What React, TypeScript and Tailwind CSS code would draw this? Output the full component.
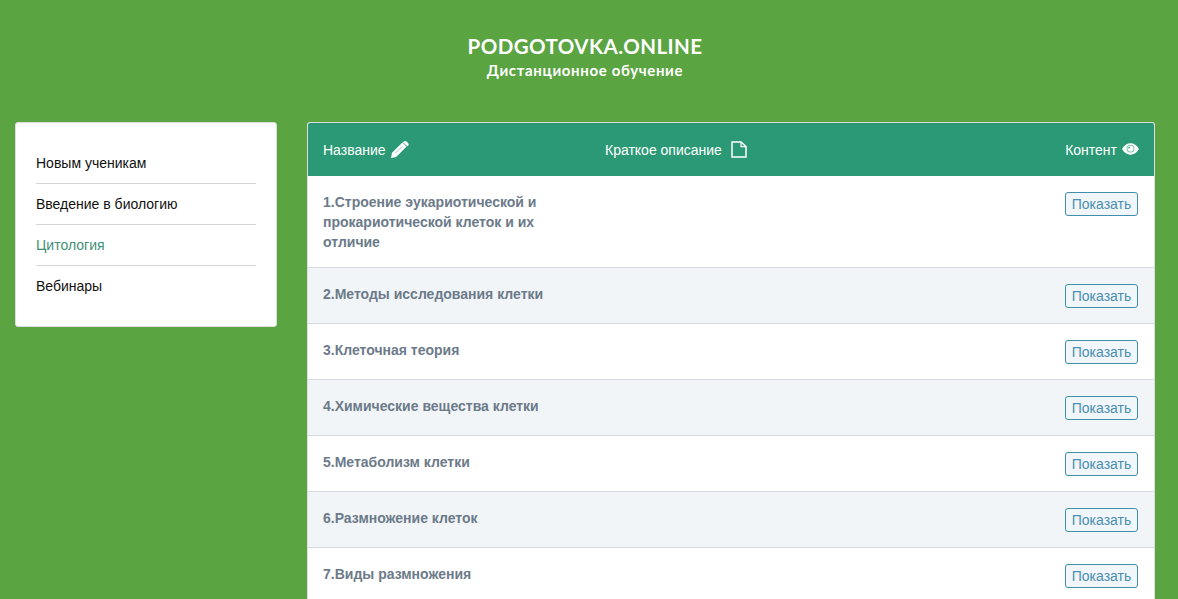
const menu = [
  { title: 'Новым ученикам', active: false },
  { title: 'Введение в биологию', active: false },
  { title: 'Цитология', active: true },
  { title: 'Вебинары', active: false },
];

const lessons = [
  '1.Строение эукариотической и прокариотической клеток и их отличие',
  '2.Методы исследования клетки',
  '3.Клеточная теория',
  '4.Химические вещества клетки',
  '5.Метаболизм клетки',
  '6.Размножение клеток',
  '7.Виды размножения',
];

function PencilIcon() {
  return (
    <svg viewBox="0 0 18 17" className="h-[17px] w-[18px] flex-none" fill="currentColor">
      <path d="M0 17 L1 11.8 L11.4 1.6 L15.6 5.6 L5.2 16 Z" />
      <path d="M12.4 0.8 C13.4 -0.2 14.7 -0.2 15.6 0.6 L17 2 C17.9 2.9 17.9 4 16.9 4.9 L16.4 5.3 L11.9 1.2 Z" />
      <path d="M3.8 12.6 L11.4 5.2" stroke="#2b9975" strokeWidth="0.5" fill="none" />
    </svg>
  );
}

function FileIcon() {
  return (
    <svg viewBox="0 0 16 17" className="h-[17px] w-[16px] flex-none" fill="none" stroke="currentColor" strokeWidth="1.5">
      <path d="M1 0.9 H10 L15 5.6 V16.1 H1 Z" />
      <path d="M10 0.9 V5.6 H15" strokeWidth="1.2" />
    </svg>
  );
}

function EyeIcon() {
  return (
    <svg viewBox="0 0 18 12" className="mb-[2px] h-[12px] w-[17px] flex-none">
      <path d="M0 6 C2.4 2 5.4 0 9 0 C12.6 0 15.6 2 18 6 C15.6 10 12.6 12 9 12 C5.4 12 2.4 10 0 6 Z" fill="currentColor" />
      <circle cx="9" cy="5.6" r="4.1" fill="#2b9975" opacity="0.75" />
      <circle cx="9" cy="5.6" r="3.3" fill="currentColor" />
      <circle cx="7.6" cy="4.4" r="0.9" fill="#2b9975" />
    </svg>
  );
}

export default function App() {
  return (
    <div className="h-[599px] overflow-hidden bg-[#5aa441] font-['Liberation_Sans',Arial,sans-serif]">
      <header className="flex h-[122px] flex-col items-center pt-[33px] pr-[8px] text-white">
        <h1 className="font-['Lato',sans-serif] text-[20.5px] leading-[26px] font-bold tracking-[0.45px]">
          PODGOTOVKA.ONLINE
        </h1>
        <p className="font-['Lato',sans-serif] text-[15px] leading-[22px] font-bold tracking-[0.65px]">
          Дистанционное обучение
        </p>
      </header>

      <div className="flex items-start gap-[30px] pl-[15px] pr-[23px]">
        <nav className="w-[262px] flex-none rounded-[3px] border border-[#dddddd] bg-white p-5">
          <ul>
            {menu.map((item, i) => (
              <li
                key={item.title}
                className={`flex items-center text-sm ${i < menu.length - 1 ? 'h-[41px] border-b border-[#d5d5d5]' : 'h-[40px]'} ${
                  item.active ? 'text-[#3f8f77]' : 'text-[#111111]'
                }`}
              >
                {item.title}
              </li>
            ))}
          </ul>
        </nav>

        <main className="min-w-0 flex-1 overflow-hidden rounded-t-[3px] border-x border-t border-[#dddddd] bg-white">
          <div className="flex h-[53px] items-center bg-[#2b9975] px-[15px] text-sm text-white">
            <div className="flex w-[282px] items-center gap-[5px]">
              Название <PencilIcon />
            </div>
            <div className="flex flex-1 items-center gap-[9px]">
              Краткое описание <FileIcon />
            </div>
            <div className="flex items-center gap-[5px]">
              Контент <EyeIcon />
            </div>
          </div>

          {lessons.map((lesson, i) => (
            <div
              key={lesson}
              className={`flex items-start justify-between border-b border-[#d5dbe0] pt-4 pr-[16px] pl-[15px] ${
                i === 0 ? 'h-[92px]' : 'h-[56px]'
              } ${i % 2 === 1 ? 'bg-[#f1f5f8]' : 'bg-white'}`}
            >
              <div className="w-[240px] text-sm leading-[20px] font-bold text-[#6c7a89]">{lesson}</div>
              <button className="h-6 w-[73px] rounded-[3px] border border-[#428fac] bg-[#f1f6fa] text-sm leading-[22px] text-[#4a8fb0]">
                Показать
              </button>
            </div>
          ))}
        </main>
      </div>
    </div>
  );
}
